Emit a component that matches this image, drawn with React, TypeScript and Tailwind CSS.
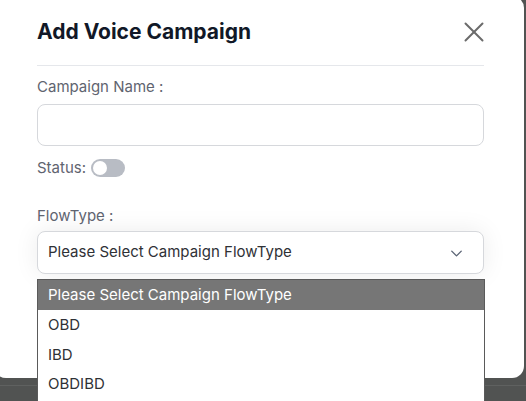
import { X, ChevronDown } from "lucide-react";

const flowTypes = ["OBD", "IBD", "OBDIBD"];

export default function App() {
  return (
    <div
      className="relative w-[526px] h-[401px] overflow-hidden bg-[#515352]"
      style={{ fontFamily: "Inter, 'Noto Sans', sans-serif" }}
    >
      {/* backdrop bits */}
      <div className="absolute left-0 right-0 top-[385px] h-px bg-[#5f6160]" />

      {/* Modal */}
      <div className="relative ml-[-6px] mt-[-4px] w-[530px] h-[382px] bg-white rounded-[12px]">
        <div className="pl-[43px] pr-[40px]">
          {/* Header */}
          <div className="flex items-center justify-between pt-[22px] pb-[19px] border-b border-[#e5e7eb]">
            <h2 className="text-[21px] leading-[28px] font-bold text-[#111827]">
              Add Voice Campaign
            </h2>
            <X className="w-[34px] h-[34px] -my-[3px] mr-[-7px] text-[#6b6b6b]" strokeWidth={1.4} />
          </div>

          {/* Campaign Name */}
          <label className="block mt-[11px] text-[15px] leading-[20px] text-[#5f6470]">
            Campaign Name :
          </label>
          <div className="mt-[7px] h-[42px] rounded-[8px] border border-[#d6d8dc] bg-white" />

          {/* Status */}
          <div className="mt-[12px] flex items-center gap-[5px] h-[20px]">
            <span className="text-[15px] leading-[20px] text-[#5f6470]">Status:</span>
            <span className="flex items-center w-[34px] h-[18px] rounded-full bg-[#b8bcc4] px-[2px]">
              <span className="w-[14px] h-[14px] rounded-full bg-white" />
            </span>
          </div>

          {/* FlowType */}
          <label className="block mt-[28px] text-[15px] leading-[20px] text-[#5f6470]">
            FlowType :
          </label>
          <div className="mt-[5px] h-[43px] rounded-[8px] border border-[#d6d8dc] bg-white flex items-center justify-between pl-[10px] pr-[17px] shadow-[0_0_24px_rgba(0,0,0,0.08)]">
            <span className="text-[15px] text-[#2f3136]">Please Select Campaign FlowType</span>
            <ChevronDown className="w-[19px] h-[19px] mt-[1px] text-[#5b6475]" strokeWidth={1.7} />
          </div>
        </div>
      </div>

      {/* Open dropdown list */}
      <div className="absolute left-[37px] top-[279px] w-[448px] h-[130px] bg-white border border-[#5a5a5a] border-b-0">
        <div className="h-[30px] flex items-center pl-[10px] pt-[1px] bg-[#767676] text-white text-[15px]">
          Please Select Campaign FlowType
        </div>
        {flowTypes.map((t) => (
          <div key={t} className="h-[29.5px] flex items-center pl-[10px] pt-[1px] text-[15px] text-[#2f3136]">
            {t}
          </div>
        ))}
      </div>
    </div>
  );
}
